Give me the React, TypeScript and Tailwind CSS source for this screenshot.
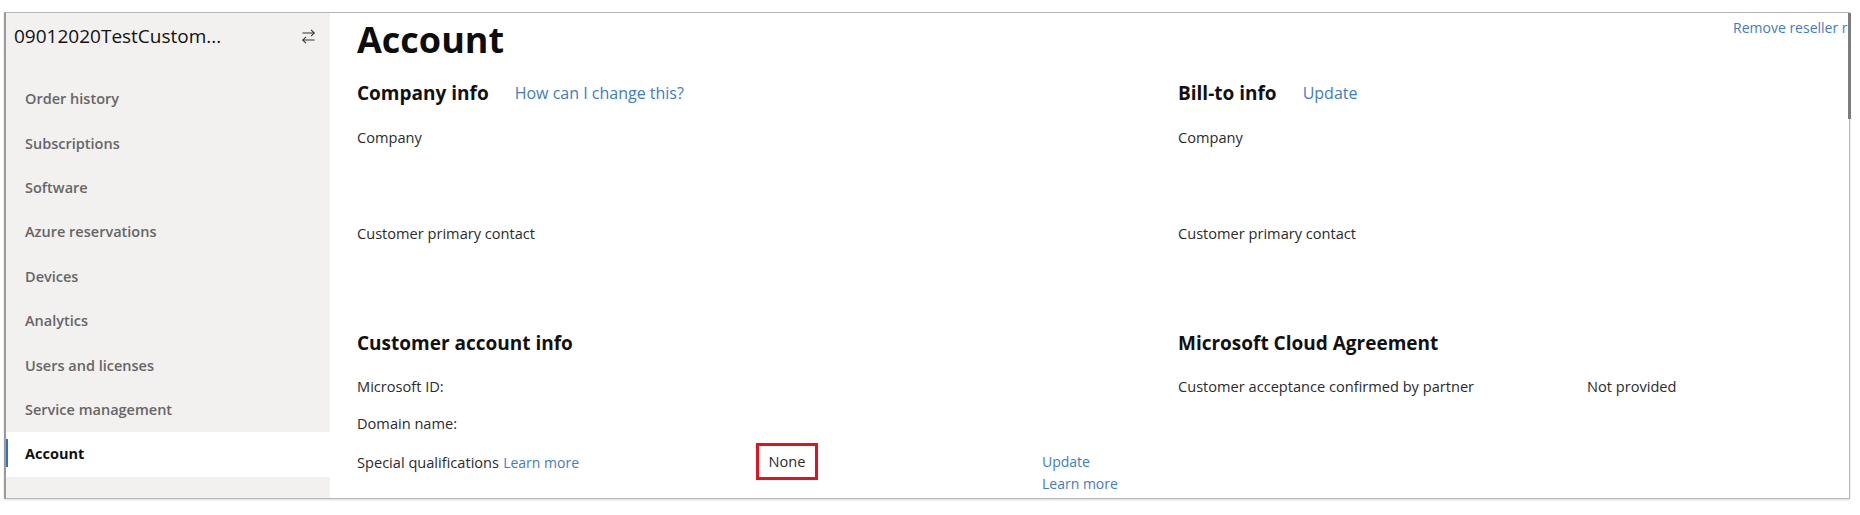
import { ArrowRightLeft } from "lucide-react";

const navItems = [
  "Order history",
  "Subscriptions",
  "Software",
  "Azure reservations",
  "Devices",
  "Analytics",
  "Users and licenses",
  "Service management",
  "Account",
];

const Sidebar = () => {
  return (
    <div className="w-[324px] shrink-0 bg-[#f2f1f0] flex flex-col">
      <div className="h-[46px] flex items-center justify-between pl-[8px] pr-[13px]">
        <span className="text-[19px] text-[#111]">09012020TestCustom...</span>
        <ArrowRightLeft className="size-[17px] text-[#333]" strokeWidth={1.5} />
      </div>
      <div className="h-[18px]" />
      {navItems.map((item) => {
        const active = item === "Account";
        return (
          <div
            key={item}
            className={
              active
                ? "relative h-[44.4px] flex items-center pl-[19px] bg-white"
                : "h-[44.4px] flex items-center pl-[19px]"
            }
          >
            {active && (
              <span className="absolute left-0 top-[7px] bottom-[10px] w-[2px] bg-[#2f6fd0]" />
            )}
            <span
              className={
                active
                  ? "text-[14.5px] font-bold text-[#111]"
                  : "text-[14.5px] font-semibold text-[#666]"
              }
            >
              {item}
            </span>
          </div>
        );
      })}
    </div>
  );
};

const Link = ({
  children,
  big,
}: {
  children: React.ReactNode;
  big?: boolean;
}) => (
  <span className={big ? "text-[16px] text-[#3f7cc0]" : "text-[14px] text-[#3f7cc0]"}>
    {children}
  </span>
);

const Label = ({ children }: { children: React.ReactNode }) => (
  <span className="text-[14.6px] text-[#2b2b2b]">{children}</span>
);

const Heading = ({ children }: { children: React.ReactNode }) => (
  <span className="text-[19px] font-bold text-[#111]">{children}</span>
);

const CompanyInfo = ({ title, link }: { title: string; link: string }) => (
  <div className="flex flex-col">
    <div className="h-[56px] flex items-center gap-[26px]">
      <Heading>{title}</Heading>
      <Link big>{link}</Link>
    </div>
    <div className="h-[34px] flex items-center">
      <Label>Company</Label>
    </div>
    <div className="h-[62px]" />
    <div className="h-[34px] flex items-center">
      <Label>Customer primary contact</Label>
    </div>
    <div className="h-[65px]" />
  </div>
);

const CustomerAccountInfo = () => (
  <div className="flex flex-col">
    <div className="h-[54px] flex items-center">
      <Heading>Customer account info</Heading>
    </div>
    <div className="h-[34px] flex items-center">
      <Label>Microsoft ID:</Label>
    </div>
    <div className="h-[39px] flex items-center">
      <Label>Domain name:</Label>
    </div>
    <div className="h-[37px] grid grid-cols-[399px_286px_1fr] grid-rows-[37px] items-center">
      <span>
        <Label>Special qualifications</Label> <Link>Learn more</Link>
      </span>
      <div className="w-[62px] h-[37px] border-[3px] border-[#e3121e] flex items-center justify-center">
        <Label>None</Label>
      </div>
      <div className="self-start pt-[8px] flex flex-col leading-[22px]">
        <Link>Update</Link>
        <Link>Learn more</Link>
      </div>
    </div>
  </div>
);

const CloudAgreement = () => (
  <div className="flex flex-col">
    <div className="h-[54px] flex items-center">
      <Heading>Microsoft Cloud Agreement</Heading>
    </div>
    <div className="h-[34px] grid grid-cols-[409px_1fr] items-center">
      <Label>Customer acceptance confirmed by partner</Label>
      <Label>Not provided</Label>
    </div>
  </div>
);

export default function App() {
  return (
    <div
      className="w-[1860px] h-[515px] bg-white pt-[12px] pl-[4px] pr-[10px] pb-[16px]"
      style={{ fontFamily: '"Open Sans", "Noto Sans", sans-serif' }}
    >
      <div className="relative h-full flex border border-[#b8b8b8] border-l-2 border-l-[#9a9a9a] shadow-[0_1px_2px_rgba(0,0,0,0.15)]">
        <Sidebar />
        <div className="flex-1 flex flex-col overflow-hidden pl-[27px]">
          <div className="h-[52px] flex justify-between items-start">
            <h1 className="text-[36px] font-bold text-[#0d0d0d] leading-[52px] mt-[1px]">
              Account
            </h1>
            <div className="w-[116px] overflow-hidden whitespace-nowrap pt-[2px]">
              <Link>Remove reseller relationship</Link>
            </div>
          </div>
          <div className="grid grid-cols-[821px_1fr]">
            <CompanyInfo title="Company info" link="How can I change this?" />
            <CompanyInfo title="Bill-to info" link="Update" />
            <CustomerAccountInfo />
            <CloudAgreement />
          </div>
        </div>
        <span className="absolute -right-[2px] top-0 w-[3px] h-[106px] bg-[#7c7c7c]" />
      </div>
    </div>
  );
}
